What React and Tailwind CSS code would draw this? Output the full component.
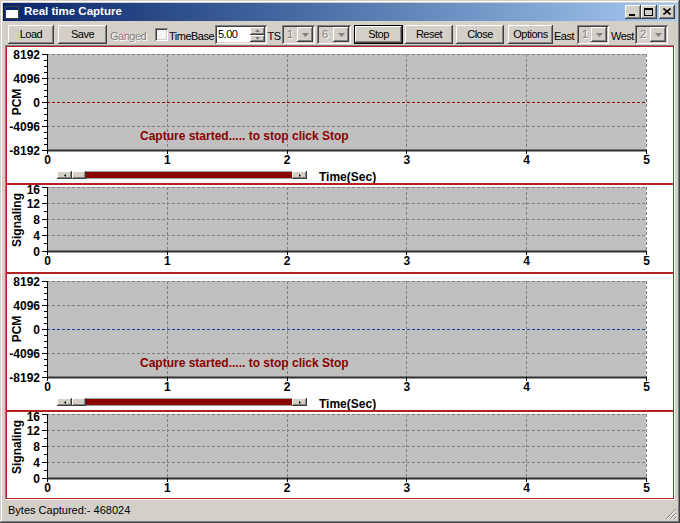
import React from 'react';

const raised =
  'bg-[#d4d0c8] shadow-[inset_-1px_-1px_#404040,inset_1px_1px_#ffffff,inset_-2px_-2px_#808080,inset_2px_2px_#d4d0c8]';
const sunken =
  'shadow-[inset_1px_1px_#808080,inset_-1px_-1px_#ffffff,inset_2px_2px_#404040,inset_-2px_-2px_#d4d0c8]';

const FONT = 'Liberation Sans, Arial, sans-serif';
const W = 666;
const L = 40;
const R = 639;
const xs = [0, 1, 2, 3, 4, 5].map((i) => L + ((R - L) * i) / 5);

function Button({ children, className = '' }) {
  return (
    <div className={`${raised} h-[19px] flex items-center justify-center ${className}`}>
      {children}
    </div>
  );
}

function Combo({ value, className = '' }) {
  return (
    <div className={`${sunken} bg-[#d4d0c8] h-[19px] flex items-center p-[2px] ${className}`}>
      <span className="flex-1 pl-[3px] text-[#808080] [text-shadow:1px_1px_#ffffff]">{value}</span>
      <div className={`${raised} w-[16px] h-full flex items-center justify-center`}>
        <svg width="7" height="4" viewBox="0 0 7 4">
          <path d="M0 0h7L3.5 4z" fill="#808080" />
        </svg>
      </div>
    </div>
  );
}

// grid, axes and labels shared by both chart kinds
function Chart({ height, T, B, labels, minor, axisTitle, titleY, zeroColor, message }) {
  const step = (B - T) / (labels.length - 1);
  const ys = labels.map((_, i) => T + i * step);
  const minorYs = [];
  for (let i = 0; i < labels.length - 1; i++) {
    for (let k = 1; k < minor; k++) minorYs.push(ys[i] + (step * k) / minor);
  }
  const mid = ys[Math.floor(labels.length / 2)];
  return (
    <svg width={W} height={height} className="block" fontFamily={FONT}>
      <rect x={L} y={T} width={R - L} height={B - T} fill="#c0c0c0" />
      {ys.slice(0, -1).map((y) => (
        <line key={y} x1={L} x2={R} y1={Math.round(y) + 0.5} y2={Math.round(y) + 0.5} stroke="#808080" strokeDasharray="3 2" />
      ))}
      {xs.slice(1).map((x) => (
        <line key={x} x1={Math.round(x) + 0.5} x2={Math.round(x) + 0.5} y1={T} y2={B} stroke="#808080" strokeDasharray="3 2" />
      ))}
      {zeroColor && (
        <line x1={L} x2={R} y1={Math.round(mid) + 0.5} y2={Math.round(mid) + 0.5} stroke={zeroColor} strokeDasharray="3 2" />
      )}
      <line x1={L + 0.5} x2={L + 0.5} y1={T} y2={B} stroke="#000" />
      <line x1={L} x2={R + 1} y1={B + 0.5} y2={B + 0.5} stroke="#303030" strokeWidth="2" />
      {ys.map((y) => (
        <line key={'t' + y} x1={L - 5} x2={L} y1={Math.round(y) + 0.5} y2={Math.round(y) + 0.5} stroke="#000" />
      ))}
      {minorYs.map((y) => (
        <line key={'m' + y} x1={L - 3} x2={L} y1={Math.round(y) + 0.5} y2={Math.round(y) + 0.5} stroke="#000" />
      ))}
      {labels.map((v, i) => (
        <text key={v} x={L - 7} y={Math.max(ys[i] + 4.5, 9)} textAnchor="end" fontSize="12" fontWeight="bold" fill="#000">
          {v}
        </text>
      ))}
      {xs.map((x, i) => (
        <g key={'x' + i}>
          <line x1={Math.round(x) + 0.5} x2={Math.round(x) + 0.5} y1={B} y2={B + 4} stroke="#000" />
          <text x={x + 0.5} y={B + 14} textAnchor="middle" fontSize="12" fontWeight="bold" fill="#000">
            {i}
          </text>
        </g>
      ))}
      <text
        transform={`translate(14 ${titleY}) rotate(-90)`}
        textAnchor="middle"
        fontSize="12"
        fontWeight="bold"
        fill="#000"
      >
        {axisTitle}
      </text>
      {message && (
        <text x="133" y="93" fontSize="12" fontWeight="bold" fill="#8b0000">
          {message}
        </text>
      )}
    </svg>
  );
}

function ScrollRow() {
  return (
    <div className="flex items-start">
      <div className="ml-[50px] mt-[2px] flex h-[8px] w-[250px]">
        <div className={`${raised} w-[15px] flex items-center justify-center`}>
          <svg width="2" height="3" viewBox="0 0 2 3">
            <path d="M2 0v3L0 1.5z" fill="#000" />
          </svg>
        </div>
        <div className={`${raised} w-[14px]`} />
        <div className="flex-1 bg-[#8b0000] border-y border-[#a0a0a0]" />
        <div className={`${raised} w-[15px] flex items-center justify-center`}>
          <svg width="2" height="3" viewBox="0 0 2 3">
            <path d="M0 0v3l2-1.5z" fill="#000" />
          </svg>
        </div>
      </div>
      <span className="ml-[12px] mt-[2px] text-[12px] leading-none font-bold text-black">Time(Sec)</span>
    </div>
  );
}

function PcmPanel({ zeroColor, className = '' }) {
  return (
    <div className={`border border-[#b22222] overflow-hidden ${className}`}>
      <Chart
        height={122}
        T={7}
        B={103}
        labels={['8192', '4096', '0', '-4096', '-8192']}
        minor={4}
        axisTitle="PCM"
        titleY={55}
        zeroColor={zeroColor}
        message="Capture started..... to stop click Stop"
      />
      <ScrollRow />
    </div>
  );
}

function SignalPanel({ className = '' }) {
  return (
    <div className={`border border-[#b22222] overflow-hidden ${className}`}>
      <Chart
        height={86}
        T={2}
        B={66}
        labels={['16', '12', '8', '4', '0']}
        minor={2}
        axisTitle="Signaling"
        titleY={35}
      />
    </div>
  );
}

export default function App() {
  return (
    <div className="relative w-[680px] h-[523px] bg-[#d4d0c8] flex flex-col px-[3px] pt-[3px] font-['Liberation_Sans',Arial,sans-serif] text-[11px] text-black shadow-[inset_-1px_-1px_#404040,inset_1px_1px_#d4d0c8,inset_-2px_-2px_#808080,inset_2px_2px_#ffffff] overflow-hidden">
      {/* title bar */}
      <div className="h-[18px] flex items-center bg-linear-to-r from-[#0a246a] to-[#a6caf0] pl-[2px] pr-[2px]">
        <div className="w-[14px] h-[13px] border border-[#404040] bg-white flex flex-col">
          <div className="h-[3px] bg-[#0a246a]" />
        </div>
        <span className="ml-[5px] text-white font-bold text-[11.5px]">Real time Capture</span>
        <div className="ml-auto flex items-center">
          <div className={`${raised} w-[16px] h-[14px] flex items-end justify-center pb-[3px]`}>
            <div className="w-[6px] h-[2px] bg-black -ml-[2px]" />
          </div>
          <div className={`${raised} w-[16px] h-[14px] flex items-center justify-center`}>
            <div className="w-[9px] h-[8px] border border-black border-t-2 -mt-[1px] -ml-[1px]" />
          </div>
          <div className={`${raised} ml-[2px] w-[16px] h-[14px] flex items-center justify-center`}>
            <svg width="8" height="7" viewBox="0 0 8 7" className="-ml-[1px] -mt-[1px]">
              <path d="M0.5 0.5L7.5 6.5M7.5 0.5L0.5 6.5" stroke="#000" strokeWidth="1.6" />
            </svg>
          </div>
        </div>
      </div>

      {/* toolbar */}
      <div className="h-[24px] flex items-start pt-[4px] pl-[5px] tracking-[-0.5px] whitespace-nowrap">
        <Button className="w-[46px]">Load</Button>
        <Button className="ml-[4px] w-[49px]">Save</Button>
        <span className="ml-[3px] w-[40px] self-center pt-[3px] text-[#808080] [text-shadow:1px_1px_#ffffff]">Ganged</span>
        <div className={`${sunken} ml-[5px] mt-[3px] w-[13px] h-[13px] bg-[#f4f4f4]`} />
        <span className="ml-[1px] w-[45px] self-center pt-[3px]">TimeBase</span>
        <div className={`${sunken} ml-[1px] w-[52px] h-[19px] bg-white flex items-center p-[2px]`}>
          <span className="flex-1 pl-[1px]">5.00</span>
          <div className="w-[15px] h-full flex flex-col">
            <div className={`${raised} flex-1 flex items-center justify-center`}>
              <svg width="5" height="3" viewBox="0 0 5 3">
                <path d="M0 3h5L2.5 0z" fill="#808080" />
              </svg>
            </div>
            <div className={`${raised} flex-1 flex items-center justify-center`}>
              <svg width="5" height="3" viewBox="0 0 5 3">
                <path d="M0 0h5L2.5 3z" fill="#808080" />
              </svg>
            </div>
          </div>
        </div>
        <span className="w-[14px] self-center pt-[3px] text-center">TS</span>
        <Combo value="1" className="ml-[1px] w-[33px]" />
        <Combo value="6" className="ml-[2px] w-[34px]" />
        <div className="ml-[3px] w-[49px] h-[19px] border border-black">
          <Button className="w-full h-full">Stop</Button>
        </div>
        <Button className="ml-[2px] w-[48px]">Reset</Button>
        <Button className="ml-[3px] w-[48px]">Close</Button>
        <Button className="ml-[4px] w-[45px]">Options</Button>
        <span className="ml-[1px] w-[23px] self-center pt-[3px]">East</span>
        <Combo value="1" className="w-[32px]" />
        <span className="ml-[2px] w-[24px] self-center pt-[3px]">West</span>
        <Combo value="2" className="w-[33px]" />
      </div>

      {/* plots */}
      <div className="mx-[2px] h-[455px] bg-white border border-t-[#808080] border-l-[#808080] border-r-white border-b-white flex flex-col">
        <PcmPanel zeroColor="#8b0000" className="h-[138px]" />
        <SignalPanel className="h-[89px]" />
        <PcmPanel zeroColor="#2040a0" className="h-[138px]" />
        <SignalPanel className="h-[88px]" />
      </div>

      {/* status bar */}
      <div className="flex-1 flex items-center pl-[5px] pb-[2px]">
        <span>Bytes Captured:- 468024</span>
      </div>
      <svg width="12" height="12" viewBox="0 0 12 12" className="absolute right-[3px] bottom-[3px]">
        <path d="M11 1L1 11M11 5L5 11M11 9L9 11" stroke="#808080" strokeWidth="1" />
        <path d="M11 2L2 11M11 6L6 11M11 10L10 11" stroke="#ffffff" strokeWidth="1" />
      </svg>
    </div>
  );
}
